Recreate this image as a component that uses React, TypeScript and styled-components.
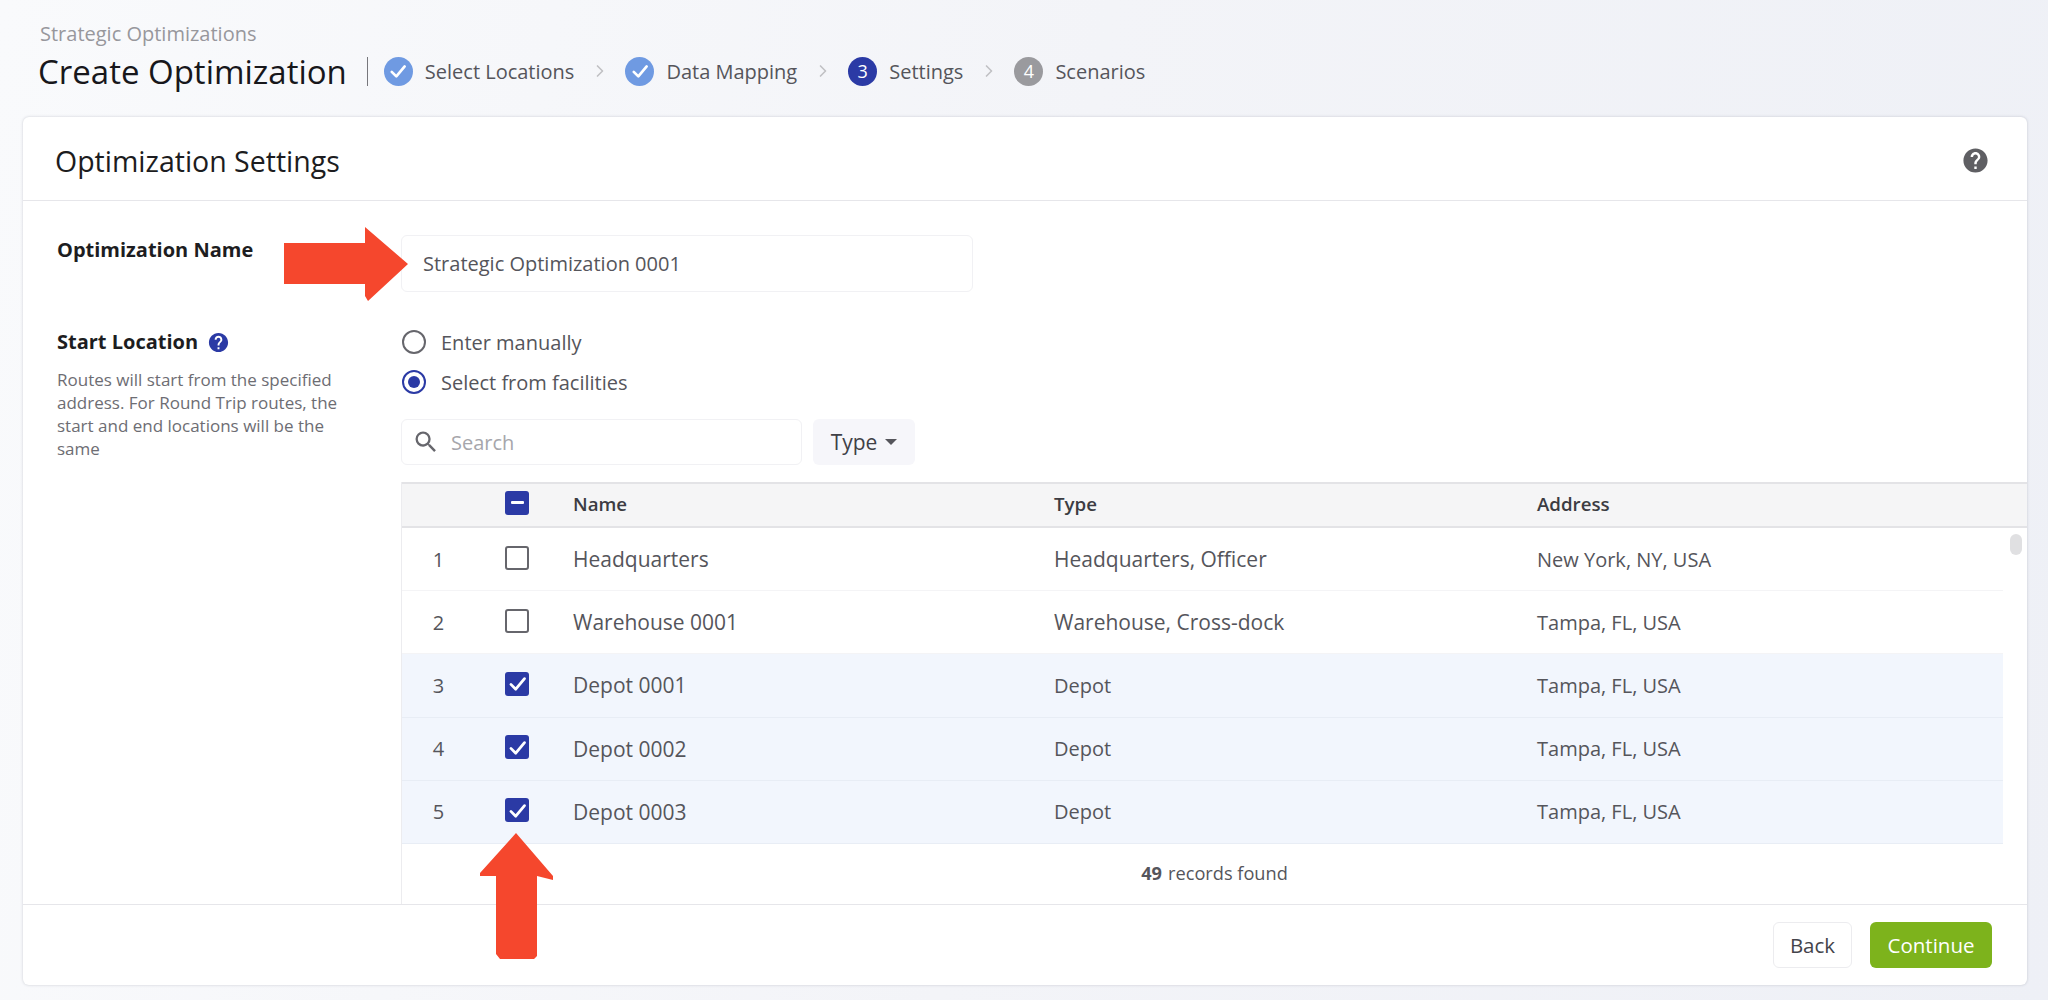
import React from "react";
import styled, { createGlobalStyle } from "styled-components";
import { MdHelp, MdSearch } from "react-icons/md";
import { ChevronRight } from "lucide-react";

const GlobalStyle = createGlobalStyle`
  html, body { margin: 0; padding: 0; }
  body { font-family: "Open Sans", "Noto Sans", sans-serif; color: #4a4a50; }
  * { box-sizing: border-box; }
`;

const Page = styled.div`
  position: relative;
  width: 2048px;
  height: 1000px;
  overflow: hidden;
  display: flex;
  flex-direction: column;
  padding: 0 21px 15px 23px;
  background: linear-gradient(100deg, #f9fafc 0%, #f3f4f8 50%, #eef0f6 100%);
`;

const TopBar = styled.header`
  height: 117px;
  flex: none;
  padding: 22px 0 0 15px;
`;

const Crumb = styled.div`
  font-size: 20px;
  line-height: 24px;
  color: #97979c;
  padding-left: 2px;
`;

const TitleRow = styled.div`
  display: flex;
  align-items: center;
  height: 30px;
  margin-top: 10px;
`;

const Title = styled.h1`
  margin: 0;
  font-size: 33px;
  font-weight: 400;
  color: #17171b;
  white-space: nowrap;
`;

const Divider = styled.span`
  width: 1px;
  height: 29px;
  margin: 0 16px 0 20px;
  background: #77777c;
`;

const Step = styled.div`
  display: flex;
  align-items: center;
  gap: 12px;
  font-size: 20px;
  color: #55555b;
  white-space: nowrap;
`;

const StepDot = styled.span<{ $bg: string }>`
  width: 29px;
  height: 29px;
  border-radius: 50%;
  background: ${(p) => p.$bg};
  color: #fff;
  font-size: 18px;
  display: flex;
  align-items: center;
  justify-content: center;
`;

const StepArrow = styled(ChevronRight)`
  color: #c0c0c4;
  margin: 0 15.5px;
`;

const Card = styled.main`
  flex: 1;
  display: flex;
  flex-direction: column;
  min-height: 0;
  background: #fff;
  border-radius: 6px;
  box-shadow: 0 0 3px rgba(40, 44, 70, 0.22);
`;

const CardHead = styled.div`
  height: 84px;
  flex: none;
  display: flex;
  align-items: center;
  justify-content: space-between;
  padding: 4px 37px 0 32px;
  border-bottom: 1px solid #e6e6ea;
`;

const CardTitle = styled.h2`
  margin: 0;
  font-size: 28.5px;
  font-weight: 400;
  color: #1c1c20;
`;

const CardBody = styled.div`
  flex: 1;
  min-height: 0;
  display: grid;
  grid-template-columns: 378px 1fr;
`;

const Side = styled.div`
  padding: 36px 44px 0 34px;
`;

const FieldLabel = styled.div`
  font-size: 20px;
  line-height: 26px;
  font-weight: 700;
  color: #1d1d21;
  display: flex;
  align-items: center;
  gap: 9px;
`;

const SideHint = styled.p`
  margin: 13px 0 0;
  font-size: 17px;
  line-height: 23px;
  color: #6d6d73;
`;

const StartLabel = styled(FieldLabel)`
  margin-top: 66px;
`;

const Content = styled.div`
  display: flex;
  flex-direction: column;
  padding-top: 34px;
  min-width: 0;
`;

const NameInput = styled.div`
  width: 572px;
  height: 57px;
  display: flex;
  align-items: center;
  padding-left: 21px;
  font-size: 20px;
  color: #55555b;
  border: 1px solid #f1f1f4;
  border-radius: 6px;
`;

const RadioList = styled.div`
  display: flex;
  flex-direction: column;
  gap: 14px;
  margin-top: 37px;
  padding-left: 1px;
`;

const RadioRow = styled.label`
  display: flex;
  align-items: center;
  gap: 15px;
  height: 26px;
  font-size: 20px;
  color: #55555b;
`;

const RadioMark = styled.span<{ $on?: boolean }>`
  width: 24px;
  height: 24px;
  border-radius: 50%;
  border: 2px solid ${(p) => (p.$on ? "#2b3aa5" : "#66666c")};
  display: flex;
  align-items: center;
  justify-content: center;
  &::after {
    content: "";
    width: 12px;
    height: 12px;
    border-radius: 50%;
    background: ${(p) => (p.$on ? "#2b3aa5" : "transparent")};
  }
`;

const Toolbar = styled.div`
  display: flex;
  gap: 11px;
  margin-top: 24px;
`;

const SearchBox = styled.div`
  width: 401px;
  height: 46px;
  display: flex;
  align-items: center;
  gap: 11px;
  padding-left: 10px;
  font-size: 20px;
  color: #a6a6ab;
  border: 1px solid #f1f1f4;
  border-radius: 6px;
  svg { color: #66666c; }
`;

const TypeButton = styled.button`
  width: 102px;
  height: 46px;
  display: flex;
  align-items: center;
  justify-content: center;
  gap: 8px;
  border: 0;
  border-radius: 6px;
  background: #f6f6fa;
  font: inherit;
  font-size: 21px;
  color: #404046;
  &::after {
    content: "";
    border-left: 6px solid transparent;
    border-right: 6px solid transparent;
    border-top: 6px solid #55555b;
  }
`;

const Table = styled.div`
  flex: 1;
  min-height: 0;
  margin-top: 17px;
  display: flex;
  flex-direction: column;
  border-left: 1px solid #ececef;
`;

const Columns = `
  display: grid;
  grid-template-columns: 73px 98px 481px 483px 1fr;
  align-items: center;
`;

const HeadRow = styled.div`
  ${Columns}
  height: 46px;
  flex: none;
  background: #f5f5f6;
  border-top: 2px solid #e3e3e6;
  border-bottom: 2px solid #e3e3e6;
  font-size: 18.7px;
  line-height: 24px;
  font-weight: 600;
  color: #3c3c42;
  padding-bottom: 2px;
`;

const BodyWrap = styled.div`
  display: flex;
  flex: none;
`;

const Rows = styled.div`
  width: 1601px;
`;

const Row = styled.div<{ $on?: boolean }>`
  ${Columns}
  height: 63.2px;
  font-size: 20px;
  color: #55555b;
  background: ${(p) => (p.$on ? "#f2f6fd" : "#fff")};
  border-bottom: 1px solid ${(p) => (p.$on ? "#e8edf5" : "#f4f4f6")};
`;

const Num = styled.span`
  text-align: center;
`;

const NameCell = styled.span`
  font-size: 21px;
`;

const TypeCell = styled.span<{ $wide?: boolean }>`
  font-size: ${(p) => (p.$wide ? "21px" : "20px")};
`;

const CheckCell = styled.span`
  padding-left: 30px;
  display: flex;
  margin-top: -3px;
`;

const Check = styled.span<{ $on?: boolean }>`
  width: 24px;
  height: 24px;
  border-radius: 3px;
  display: flex;
  align-items: center;
  justify-content: center;
  background: ${(p) => (p.$on ? "#2b3aa5" : "#fff")};
  border: ${(p) => (p.$on ? "0" : "2px solid #66666c")};
`;

const Scroll = styled.div`
  flex: 1;
  padding: 6px 5px 0 7px;
`;

const ScrollThumb = styled.div`
  height: 21px;
  border-radius: 6px;
  background: #e0e0e2;
`;

const Records = styled.div`
  flex: 1;
  display: flex;
  align-items: center;
  justify-content: center;
  gap: 6px;
  padding-bottom: 2px;
  font-size: 18.2px;
  color: #55555b;
  b { font-weight: 700; }
`;

const CardFoot = styled.footer`
  height: 81px;
  flex: none;
  display: flex;
  align-items: center;
  justify-content: flex-end;
  gap: 18px;
  padding: 0 35px 0 0;
  border-top: 1px solid #e6e6ea;
`;

const Button = styled.button<{ $primary?: boolean }>`
  height: 46px;
  width: ${(p) => (p.$primary ? "122px" : "79px")};
  border-radius: 6px;
  font: inherit;
  font-size: 20.5px;
  font-weight: 500;
  color: ${(p) => (p.$primary ? "#fff" : "#44444a")};
  background: ${(p) => (p.$primary ? "#7db31c" : "#fff")};
  border: ${(p) => (p.$primary ? "0" : "1px solid #ececef")};
`;

const Annotation = styled.svg`
  position: absolute;
  left: 0;
  top: 0;
  pointer-events: none;
`;

const steps = [
  { label: "Select Locations", bg: "#6f9ae2", done: true },
  { label: "Data Mapping", bg: "#6f9ae2", done: true },
  { label: "Settings", bg: "#2b3aa5", num: 3 },
  { label: "Scenarios", bg: "#9a9a9e", num: 4 },
];

const facilities = [
  { name: "Headquarters", type: "Headquarters, Officer", address: "New York, NY, USA", wide: true },
  { name: "Warehouse 0001", type: "Warehouse, Cross-dock", address: "Tampa, FL, USA", wide: true },
  { name: "Depot 0001", type: "Depot", address: "Tampa, FL, USA", on: true },
  { name: "Depot 0002", type: "Depot", address: "Tampa, FL, USA", on: true },
  { name: "Depot 0003", type: "Depot", address: "Tampa, FL, USA", on: true },
];

const Tick = ({ size }: { size: number }) => (
  <svg width={size} height={size} viewBox="0 0 24 24" fill="none" stroke="#fff" strokeWidth="3.2" strokeLinecap="round" strokeLinejoin="round">
    <path d="M4.5 13l5.5 5.5 10-12" />
  </svg>
);

export default function App() {
  return (
    <Page>
      <GlobalStyle />
      <TopBar>
        <Crumb>Strategic Optimizations</Crumb>
        <TitleRow>
          <Title>Create Optimization</Title>
          <Divider />
          {steps.map((s, i) => (
            <React.Fragment key={s.label}>
              <Step>
                <StepDot $bg={s.bg}>{s.done ? <Tick size={20} /> : s.num}</StepDot>
                {s.label}
              </Step>
              {i < steps.length - 1 && <StepArrow size={20} />}
            </React.Fragment>
          ))}
        </TitleRow>
      </TopBar>
      <Card>
        <CardHead>
          <CardTitle>Optimization Settings</CardTitle>
          <MdHelp size={29} color="#5f5f63" />
        </CardHead>
        <CardBody>
          <Side>
            <FieldLabel>Optimization Name</FieldLabel>
            <StartLabel>
              Start Location
              <MdHelp size={23} color="#2b3aa5" />
            </StartLabel>
            <SideHint>
              Routes will start from the specified address. For Round Trip routes, the start and end locations will be the same
            </SideHint>
          </Side>
          <Content>
            <NameInput>Strategic Optimization 0001</NameInput>
            <RadioList>
              <RadioRow>
                <RadioMark />
                Enter manually
              </RadioRow>
              <RadioRow>
                <RadioMark $on />
                Select from facilities
              </RadioRow>
            </RadioList>
            <Toolbar>
              <SearchBox>
                <MdSearch size={28} />
                Search
              </SearchBox>
              <TypeButton>Type</TypeButton>
            </Toolbar>
            <Table>
              <HeadRow>
                <span />
                <CheckCell>
                  <Check $on>
                    <svg width="13" height="3" viewBox="0 0 13 3">
                      <rect width="13" height="3" rx="1" fill="#fff" />
                    </svg>
                  </Check>
                </CheckCell>
                <span>Name</span>
                <span>Type</span>
                <span>Address</span>
              </HeadRow>
              <BodyWrap>
                <Rows>
                  {facilities.map((f, i) => (
                    <Row key={f.name} $on={f.on}>
                      <Num>{i + 1}</Num>
                      <CheckCell>
                        <Check $on={f.on}>{f.on && <Tick size={21} />}</Check>
                      </CheckCell>
                      <NameCell>{f.name}</NameCell>
                      <TypeCell $wide={f.wide}>{f.type}</TypeCell>
                      <span>{f.address}</span>
                    </Row>
                  ))}
                </Rows>
                <Scroll>
                  <ScrollThumb />
                </Scroll>
              </BodyWrap>
              <Records>
                <b>49</b> records found
              </Records>
            </Table>
          </Content>
        </CardBody>
        <CardFoot>
          <Button>Back</Button>
          <Button $primary>Continue</Button>
        </CardFoot>
      </Card>
      <Annotation width="2048" height="1000" viewBox="0 0 2048 1000">
        <path d="M284 243H365V227L408 264L368 301L365 296V284H284Z" fill="#f5472d" />
        <path d="M516 833L553 876V880L537 876V956L534 959H500L496 954V876H480V873Z" fill="#f5472d" />
      </Annotation>
    </Page>
  );
}
